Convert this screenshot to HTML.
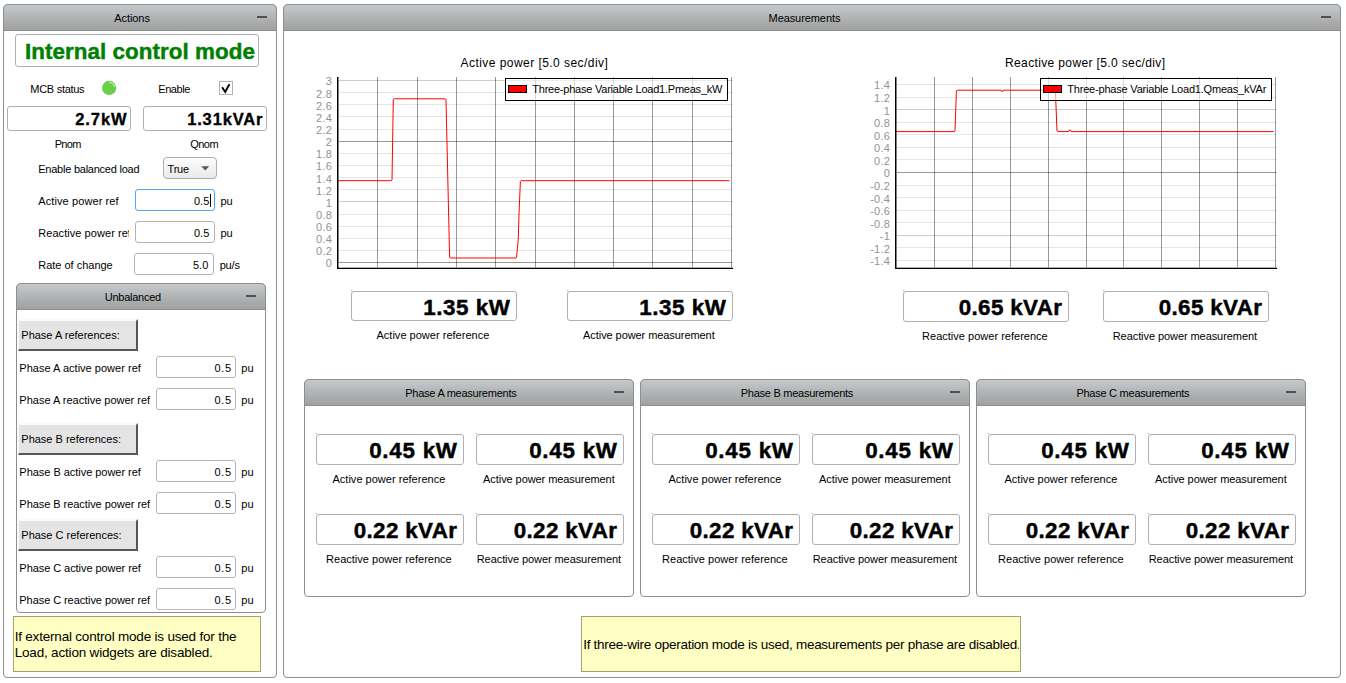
<!DOCTYPE html>
<html lang="en"><head><meta charset="utf-8"><title>Three-phase Variable Load SCADA panel</title>
<style>
html,body{margin:0;padding:0;background:#fff;}
body{width:1346px;height:683px;position:relative;overflow:hidden;font-family:"Liberation Sans",sans-serif;}
div,span.t,svg.chart{position:absolute;box-sizing:border-box;}
span.t{white-space:pre;display:block;}
.panel{border:1px solid #8e8e8e;border-radius:5px 5px 4px 4px;background:#fff;}
.phead{border:1px solid #8e8e8e;border-radius:5px 5px 0 0;background:linear-gradient(#c5cacd,#b3b6b8 45%,#a8a9a9 75%,#a2a2a2);}
.minus{width:10px;height:2px;background:#505050;}
.disp{border:1px solid #b0b0b0;border-radius:3px;background:#fff;}
.inp{border:1px solid #b4b4b4;border-radius:3px;background:#fff;}
.inp.focus{border-color:#4ba6f7;}
.combo{border:1px solid #adadad;border-radius:4px;background:linear-gradient(#fcfcfc,#eaeaea);}
.chk{border:1px solid #b2b2b2;background:#fff;}
.raised{background:#e4e4e4;border:2px solid;border-left-width:1px;border-color:#fafafa #565656 #565656 #fafafa;}
.dot::before{content:'';position:absolute;left:-1px;top:-2px;width:1px;height:1px;background:#a8a8a8;}
.note{background:#ffffc3;border:1px solid #a2a274;}
.led{width:14px;height:14px;border-radius:50%;background:radial-gradient(circle at 50% 50%,#6fd24a 0,#66cc44 100%);}
</style></head>
<body>
<div class="panel" style="left:3px;top:4px;width:274px;height:674px;"></div>
<div class="phead" style="left:3px;top:4px;width:274px;height:27px;"></div>
<div class="minus" style="left:257px;top:16px"></div>
<span class="t" style="left:114.16px;top:11px;height:15px;line-height:15px;font-size:11px;color:#000;letter-spacing:-0.050px;">Actions</span>
<div class="panel" style="left:283px;top:4px;width:1058px;height:674px;"></div>
<div class="phead" style="left:283px;top:4px;width:1058px;height:27px;"></div>
<div class="minus" style="left:1321px;top:16px"></div>
<span class="t" style="left:768.56px;top:11px;height:15px;line-height:15px;font-size:11px;color:#000;letter-spacing:-0.081px;">Measurements</span>
<div class="disp" style="left:15px;top:34px;width:244px;height:33px;"></div>
<span class="t" style="left:25.10px;top:37px;height:30px;line-height:30px;font-size:22.4px;color:#008000;font-weight:bold;-webkit-text-stroke:0.45px #008000;letter-spacing:0.044px;">Internal control mode</span>
<span class="t" style="left:30.26px;top:82px;height:15px;line-height:15px;font-size:11px;color:#000;letter-spacing:-0.275px;">MCB status</span>
<svg style="position:absolute;left:100px;top:79px" width="18" height="18" viewBox="100 79 18 18"><circle cx="109.1" cy="87.9" r="7.1" fill="#6bd048"/><path d="M109.5 82.5 A5.5 5.5 0 0 1 114.6 86.6" fill="none" stroke="#fff" stroke-opacity="0.8" stroke-width="0.9" stroke-linecap="round"/></svg>
<span class="t" style="left:158.26px;top:82px;height:15px;line-height:15px;font-size:11px;color:#000;letter-spacing:-0.417px;">Enable</span>
<div class="chk" style="left:219px;top:81px;width:14px;height:14px;"><svg width="12" height="12" viewBox="0 0 12 12" style="position:absolute;left:0;top:0"><path d="M2.1 5.3 L5.2 10.0 L9.4 2.2" fill="none" stroke="#000" stroke-width="1.9" stroke-linejoin="miter"/></svg></div>
<div class="disp" style="left:7px;top:106px;width:124px;height:25px;"></div>
<span class="t" style="left:75.24px;top:108px;height:22px;line-height:22px;font-size:16.5px;color:#000;font-weight:bold;-webkit-text-stroke:0.33px #000;letter-spacing:0.908px;">2.7kW</span>
<div class="disp" style="left:143px;top:106px;width:124px;height:25px;"></div>
<span class="t" style="left:187.14px;top:108px;height:22px;line-height:22px;font-size:16.5px;color:#000;font-weight:bold;-webkit-text-stroke:0.33px #000;letter-spacing:0.857px;">1.31kVAr</span>
<span class="t" style="left:54.66px;top:137px;height:15px;line-height:15px;font-size:11px;color:#000;letter-spacing:-0.623px;">Pnom</span>
<span class="t" style="left:190.16px;top:137px;height:15px;line-height:15px;font-size:11px;color:#000;letter-spacing:-0.496px;">Qnom</span>
<span class="t" style="left:38.26px;top:162px;height:15px;line-height:15px;font-size:11px;color:#000;letter-spacing:-0.239px;">Enable balanced load</span>
<div class="combo" style="left:163px;top:157px;width:54px;height:22px;"></div>
<span class="t" style="left:167.60px;top:162px;height:15px;line-height:15px;font-size:11px;color:#000;letter-spacing:-0.250px;">True</span>
<svg style="position:absolute;left:201px;top:166px" width="9" height="5" viewBox="0 0 9 5"><path d="M0.3 0.3 L8.2 0.3 L4.25 4.4 Z" fill="#555"/></svg>
<span class="t" style="left:38.26px;top:194px;height:15px;line-height:15px;font-size:11px;color:#000;letter-spacing:0.100px;">Active power ref</span>
<div class="inp focus" style="left:135px;top:189px;width:80px;height:22px;"></div>
<span class="t" style="left:194.00px;top:194px;height:15px;line-height:15px;font-size:11px;color:#000;">0.5</span>
<div style="position:absolute;left:210px;top:194px;width:1px;height:13px;background:#000"></div>
<span class="t" style="left:220.50px;top:194px;height:15px;line-height:15px;font-size:11px;color:#000;letter-spacing:-0.200px;">pu</span>
<span class="t" style="left:38.26px;top:226px;height:15px;line-height:15px;font-size:11px;color:#000;letter-spacing:0.057px;width:90.6px;overflow:hidden;">Reactive power ref</span>
<div class="inp" style="left:135px;top:221px;width:80px;height:22px;"></div>
<span class="t" style="left:194.00px;top:226px;height:15px;line-height:15px;font-size:11px;color:#000;">0.5</span>
<span class="t" style="left:220.50px;top:226px;height:15px;line-height:15px;font-size:11px;color:#000;letter-spacing:-0.200px;">pu</span>
<span class="t" style="left:38.26px;top:258px;height:15px;line-height:15px;font-size:11px;color:#000;letter-spacing:-0.011px;">Rate of change</span>
<div class="inp" style="left:134px;top:253px;width:80px;height:22px;"></div>
<span class="t" style="left:193.00px;top:258px;height:15px;line-height:15px;font-size:11px;color:#000;">5.0</span>
<span class="t" style="left:219.70px;top:258px;height:15px;line-height:15px;font-size:11px;color:#000;letter-spacing:-0.200px;">pu/s</span>
<div class="panel" style="left:16px;top:283px;width:250px;height:330px;"></div>
<div class="phead" style="left:16px;top:283px;width:250px;height:27px;"></div>
<div class="minus" style="left:246px;top:295px"></div>
<span class="t" style="left:104.77px;top:290px;height:15px;line-height:15px;font-size:11px;color:#000;letter-spacing:-0.250px;">Unbalanced</span>
<div class="raised" style="left:18px;top:319px;width:120px;height:32px;"></div>
<span class="t" style="left:21.30px;top:328px;height:15px;line-height:15px;font-size:11px;color:#000;">Phase A references:</span>
<span class="t" style="left:19.36px;top:361px;height:15px;line-height:15px;font-size:11px;color:#000;letter-spacing:0.017px;">Phase A active power ref</span>
<div class="inp" style="left:156px;top:356px;width:80px;height:22px;"></div>
<span class="t" style="left:214.56px;top:361px;height:15px;line-height:15px;font-size:11px;color:#000;letter-spacing:0.642px;">0.5</span>
<span class="t" style="left:241.36px;top:361px;height:15px;line-height:15px;font-size:11px;color:#000;letter-spacing:0.130px;">pu</span>
<span class="t" style="left:19.36px;top:393px;height:15px;line-height:15px;font-size:11px;color:#000;letter-spacing:-0.003px;">Phase A reactive power ref</span>
<div class="inp" style="left:156px;top:388px;width:80px;height:22px;"></div>
<span class="t" style="left:214.56px;top:393px;height:15px;line-height:15px;font-size:11px;color:#000;letter-spacing:0.642px;">0.5</span>
<span class="t" style="left:241.36px;top:393px;height:15px;line-height:15px;font-size:11px;color:#000;letter-spacing:0.130px;">pu</span>
<div class="raised" style="left:18px;top:423px;width:120px;height:32px;"></div>
<span class="t" style="left:21.30px;top:432px;height:15px;line-height:15px;font-size:11px;color:#000;">Phase B references:</span>
<span class="t" style="left:19.36px;top:465px;height:15px;line-height:15px;font-size:11px;color:#000;letter-spacing:-0.036px;">Phase B active power ref</span>
<div class="inp" style="left:156px;top:460px;width:80px;height:22px;"></div>
<span class="t" style="left:214.56px;top:465px;height:15px;line-height:15px;font-size:11px;color:#000;letter-spacing:0.642px;">0.5</span>
<span class="t" style="left:241.36px;top:465px;height:15px;line-height:15px;font-size:11px;color:#000;letter-spacing:0.130px;">pu</span>
<span class="t" style="left:19.36px;top:497px;height:15px;line-height:15px;font-size:11px;color:#000;letter-spacing:-0.052px;">Phase B reactive power ref</span>
<div class="inp" style="left:156px;top:492px;width:80px;height:22px;"></div>
<span class="t" style="left:214.56px;top:497px;height:15px;line-height:15px;font-size:11px;color:#000;letter-spacing:0.642px;">0.5</span>
<span class="t" style="left:241.36px;top:497px;height:15px;line-height:15px;font-size:11px;color:#000;letter-spacing:0.130px;">pu</span>
<div class="raised" style="left:18px;top:519px;width:120px;height:32px;"></div>
<span class="t" style="left:21.30px;top:528px;height:15px;line-height:15px;font-size:11px;color:#000;">Phase C references:</span>
<span class="t" style="left:19.36px;top:561px;height:15px;line-height:15px;font-size:11px;color:#000;letter-spacing:-0.061px;">Phase C active power ref</span>
<div class="inp" style="left:156px;top:556px;width:80px;height:22px;"></div>
<span class="t" style="left:214.56px;top:561px;height:15px;line-height:15px;font-size:11px;color:#000;letter-spacing:0.642px;">0.5</span>
<span class="t" style="left:241.36px;top:561px;height:15px;line-height:15px;font-size:11px;color:#000;letter-spacing:0.130px;">pu</span>
<span class="t" style="left:19.36px;top:593px;height:15px;line-height:15px;font-size:11px;color:#000;letter-spacing:-0.076px;">Phase C reactive power ref</span>
<div class="inp" style="left:156px;top:588px;width:80px;height:22px;"></div>
<span class="t" style="left:214.56px;top:593px;height:15px;line-height:15px;font-size:11px;color:#000;letter-spacing:0.642px;">0.5</span>
<span class="t" style="left:241.36px;top:593px;height:15px;line-height:15px;font-size:11px;color:#000;letter-spacing:0.130px;">pu</span>
<div class="note" style="left:13px;top:616px;width:248px;height:56px;"></div>
<span class="t" style="left:14.66px;top:628px;height:18px;line-height:18px;font-size:13.5px;color:#000;letter-spacing:-0.199px;">If external control mode is used for the</span>
<span class="t" style="left:14.66px;top:644px;height:18px;line-height:18px;font-size:13.5px;color:#000;letter-spacing:-0.181px;">Load, action widgets are disabled.</span>
<svg class="chart" style="left:0;top:0" width="1346" height="683" viewBox="0 0 1346 683"><line x1="339" y1="262.5" x2="732.5" y2="262.5" stroke="#000" stroke-opacity="0.4" stroke-width="1"/><line x1="339" y1="250.5" x2="732.5" y2="250.5" stroke="#000" stroke-opacity="0.098" stroke-width="1"/><line x1="339" y1="238.5" x2="732.5" y2="238.5" stroke="#000" stroke-opacity="0.098" stroke-width="1"/><line x1="339" y1="226.5" x2="732.5" y2="226.5" stroke="#000" stroke-opacity="0.098" stroke-width="1"/><line x1="339" y1="214.5" x2="732.5" y2="214.5" stroke="#000" stroke-opacity="0.098" stroke-width="1"/><line x1="339" y1="201.5" x2="732.5" y2="201.5" stroke="#000" stroke-opacity="0.2" stroke-width="1"/><line x1="339" y1="189.5" x2="732.5" y2="189.5" stroke="#000" stroke-opacity="0.098" stroke-width="1"/><line x1="339" y1="177.5" x2="732.5" y2="177.5" stroke="#000" stroke-opacity="0.098" stroke-width="1"/><line x1="339" y1="165.5" x2="732.5" y2="165.5" stroke="#000" stroke-opacity="0.098" stroke-width="1"/><line x1="339" y1="153.5" x2="732.5" y2="153.5" stroke="#000" stroke-opacity="0.098" stroke-width="1"/><line x1="339" y1="141.5" x2="732.5" y2="141.5" stroke="#000" stroke-opacity="0.4" stroke-width="1"/><line x1="339" y1="129.5" x2="732.5" y2="129.5" stroke="#000" stroke-opacity="0.098" stroke-width="1"/><line x1="339" y1="116.5" x2="732.5" y2="116.5" stroke="#000" stroke-opacity="0.098" stroke-width="1"/><line x1="339" y1="104.5" x2="732.5" y2="104.5" stroke="#000" stroke-opacity="0.098" stroke-width="1"/><line x1="339" y1="92.5" x2="732.5" y2="92.5" stroke="#000" stroke-opacity="0.098" stroke-width="1"/><line x1="339" y1="80.5" x2="732.5" y2="80.5" stroke="#000" stroke-opacity="0.2" stroke-width="1"/><line x1="377.5" y1="77" x2="377.5" y2="267.5" stroke="#000" stroke-opacity="0.4" stroke-width="1"/><line x1="417.5" y1="77" x2="417.5" y2="267.5" stroke="#000" stroke-opacity="0.4" stroke-width="1"/><line x1="456.5" y1="77" x2="456.5" y2="267.5" stroke="#000" stroke-opacity="0.4" stroke-width="1"/><line x1="495.5" y1="77" x2="495.5" y2="267.5" stroke="#000" stroke-opacity="0.4" stroke-width="1"/><line x1="535.5" y1="77" x2="535.5" y2="267.5" stroke="#000" stroke-opacity="0.4" stroke-width="1"/><line x1="574.5" y1="77" x2="574.5" y2="267.5" stroke="#000" stroke-opacity="0.4" stroke-width="1"/><line x1="613.5" y1="77" x2="613.5" y2="267.5" stroke="#000" stroke-opacity="0.4" stroke-width="1"/><line x1="652.5" y1="77" x2="652.5" y2="267.5" stroke="#000" stroke-opacity="0.4" stroke-width="1"/><line x1="692.5" y1="77" x2="692.5" y2="267.5" stroke="#000" stroke-opacity="0.4" stroke-width="1"/><line x1="731.5" y1="77" x2="731.5" y2="267.5" stroke="#000" stroke-opacity="0.4" stroke-width="1"/><path d="M338.0 180.7 L391.3 180.7 L392.0 180.0 L393.3 99.4 L394.0 98.8 L445.4 98.8 L446.0 100.0 L449.6 257.1 L450.3 258.0 L516.0 258.0 L516.6 257.1 L518.3 238.9 L519.0 214.0 L520.4 181.3 L521.0 180.7 L729.5 180.7" fill="none" stroke="#ff0000" stroke-width="1" stroke-linejoin="round"/><rect x="337" y="77" width="1.5" height="192" fill="#000"/><rect x="337" y="267.7" width="396" height="1.3" fill="#000"/><rect x="505.5" y="78.5" width="222" height="22" fill="rgba(255,255,255,0.62)" stroke="#000" stroke-width="1"/><rect x="508.5" y="85.5" width="18" height="7" fill="#ff0000" stroke="#000" stroke-width="1"/></svg>
<span class="t" style="left:460.52px;top:55px;height:16px;line-height:16px;font-size:12px;color:#000;letter-spacing:0.452px;">Active power [5.0 sec/div]</span>
<span class="t" style="left:532.26px;top:82px;height:15px;line-height:15px;font-size:11px;color:#000;letter-spacing:-0.227px;">Three-phase Variable Load1.Pmeas_kW</span>
<span class="t" style="left:325.77px;top:74px;height:15px;line-height:15px;font-size:11px;color:#939393;letter-spacing:0.250px;">3</span>
<span class="t" style="left:316.10px;top:87px;height:15px;line-height:15px;font-size:11px;color:#939393;letter-spacing:0.250px;">2.8</span>
<span class="t" style="left:316.10px;top:99px;height:15px;line-height:15px;font-size:11px;color:#939393;letter-spacing:0.250px;">2.6</span>
<span class="t" style="left:316.10px;top:111px;height:15px;line-height:15px;font-size:11px;color:#939393;letter-spacing:0.250px;">2.4</span>
<span class="t" style="left:316.10px;top:123px;height:15px;line-height:15px;font-size:11px;color:#939393;letter-spacing:0.250px;">2.2</span>
<span class="t" style="left:325.77px;top:135px;height:15px;line-height:15px;font-size:11px;color:#939393;letter-spacing:0.250px;">2</span>
<span class="t" style="left:316.10px;top:147px;height:15px;line-height:15px;font-size:11px;color:#939393;letter-spacing:0.250px;">1.8</span>
<span class="t" style="left:316.10px;top:159px;height:15px;line-height:15px;font-size:11px;color:#939393;letter-spacing:0.250px;">1.6</span>
<span class="t" style="left:316.10px;top:172px;height:15px;line-height:15px;font-size:11px;color:#939393;letter-spacing:0.250px;">1.4</span>
<span class="t" style="left:316.10px;top:184px;height:15px;line-height:15px;font-size:11px;color:#939393;letter-spacing:0.250px;">1.2</span>
<span class="t" style="left:325.77px;top:196px;height:15px;line-height:15px;font-size:11px;color:#939393;letter-spacing:0.250px;">1</span>
<span class="t" style="left:316.10px;top:208px;height:15px;line-height:15px;font-size:11px;color:#939393;letter-spacing:0.250px;">0.8</span>
<span class="t" style="left:316.10px;top:220px;height:15px;line-height:15px;font-size:11px;color:#939393;letter-spacing:0.250px;">0.6</span>
<span class="t" style="left:316.10px;top:232px;height:15px;line-height:15px;font-size:11px;color:#939393;letter-spacing:0.250px;">0.4</span>
<span class="t" style="left:316.10px;top:244px;height:15px;line-height:15px;font-size:11px;color:#939393;letter-spacing:0.250px;">0.2</span>
<span class="t" style="left:325.77px;top:256px;height:15px;line-height:15px;font-size:11px;color:#939393;letter-spacing:0.250px;">0</span>
<svg class="chart" style="left:0;top:0" width="1346" height="683" viewBox="0 0 1346 683"><line x1="897" y1="260.5" x2="1276.5" y2="260.5" stroke="#000" stroke-opacity="0.098" stroke-width="1"/><line x1="897" y1="247.5" x2="1276.5" y2="247.5" stroke="#000" stroke-opacity="0.098" stroke-width="1"/><line x1="897" y1="235.5" x2="1276.5" y2="235.5" stroke="#000" stroke-opacity="0.2" stroke-width="1"/><line x1="897" y1="222.5" x2="1276.5" y2="222.5" stroke="#000" stroke-opacity="0.098" stroke-width="1"/><line x1="897" y1="210.5" x2="1276.5" y2="210.5" stroke="#000" stroke-opacity="0.098" stroke-width="1"/><line x1="897" y1="197.5" x2="1276.5" y2="197.5" stroke="#000" stroke-opacity="0.098" stroke-width="1"/><line x1="897" y1="185.5" x2="1276.5" y2="185.5" stroke="#000" stroke-opacity="0.098" stroke-width="1"/><line x1="897" y1="172.5" x2="1276.5" y2="172.5" stroke="#000" stroke-opacity="0.4" stroke-width="1"/><line x1="897" y1="159.5" x2="1276.5" y2="159.5" stroke="#000" stroke-opacity="0.098" stroke-width="1"/><line x1="897" y1="147.5" x2="1276.5" y2="147.5" stroke="#000" stroke-opacity="0.098" stroke-width="1"/><line x1="897" y1="134.5" x2="1276.5" y2="134.5" stroke="#000" stroke-opacity="0.098" stroke-width="1"/><line x1="897" y1="122.5" x2="1276.5" y2="122.5" stroke="#000" stroke-opacity="0.098" stroke-width="1"/><line x1="897" y1="109.5" x2="1276.5" y2="109.5" stroke="#000" stroke-opacity="0.2" stroke-width="1"/><line x1="897" y1="97.5" x2="1276.5" y2="97.5" stroke="#000" stroke-opacity="0.098" stroke-width="1"/><line x1="897" y1="84.5" x2="1276.5" y2="84.5" stroke="#000" stroke-opacity="0.098" stroke-width="1"/><line x1="934.5" y1="77" x2="934.5" y2="267.5" stroke="#000" stroke-opacity="0.4" stroke-width="1"/><line x1="972.5" y1="77" x2="972.5" y2="267.5" stroke="#000" stroke-opacity="0.4" stroke-width="1"/><line x1="1010.5" y1="77" x2="1010.5" y2="267.5" stroke="#000" stroke-opacity="0.4" stroke-width="1"/><line x1="1048.5" y1="77" x2="1048.5" y2="267.5" stroke="#000" stroke-opacity="0.4" stroke-width="1"/><line x1="1086.5" y1="77" x2="1086.5" y2="267.5" stroke="#000" stroke-opacity="0.4" stroke-width="1"/><line x1="1123.5" y1="77" x2="1123.5" y2="267.5" stroke="#000" stroke-opacity="0.4" stroke-width="1"/><line x1="1161.5" y1="77" x2="1161.5" y2="267.5" stroke="#000" stroke-opacity="0.4" stroke-width="1"/><line x1="1199.5" y1="77" x2="1199.5" y2="267.5" stroke="#000" stroke-opacity="0.4" stroke-width="1"/><line x1="1237.5" y1="77" x2="1237.5" y2="267.5" stroke="#000" stroke-opacity="0.4" stroke-width="1"/><line x1="1275.5" y1="77" x2="1275.5" y2="267.5" stroke="#000" stroke-opacity="0.4" stroke-width="1"/><path d="M896.0 131.6 L954.4 131.6 L955.0 131.0 L956.4 90.8 L957.0 90.2 L1001.2 90.2 L1001.8 91.6 L1002.6 91.6 L1003.2 90.2 L1054.8 90.2 L1055.4 90.8 L1057.0 131.0 L1057.6 131.6 L1068.8 131.6 L1069.5 130.0 L1070.5 130.0 L1071.2 131.6 L1273.5 131.6" fill="none" stroke="#ff0000" stroke-width="1" stroke-linejoin="round"/><rect x="895" y="77" width="1.5" height="192" fill="#000"/><rect x="895" y="267.7" width="382" height="1.3" fill="#000"/><rect x="1040.5" y="78.5" width="231" height="22" fill="rgba(255,255,255,0.62)" stroke="#000" stroke-width="1"/><rect x="1043.5" y="85.5" width="18" height="7" fill="#ff0000" stroke="#000" stroke-width="1"/></svg>
<span class="t" style="left:1005.02px;top:55px;height:16px;line-height:16px;font-size:12px;color:#000;letter-spacing:0.366px;">Reactive power [5.0 sec/div]</span>
<span class="t" style="left:1067.26px;top:82px;height:15px;line-height:15px;font-size:11px;color:#000;letter-spacing:-0.197px;">Three-phase Variable Load1.Qmeas_kVAr</span>
<span class="t" style="left:874.10px;top:78px;height:15px;line-height:15px;font-size:11px;color:#939393;letter-spacing:0.250px;">1.4</span>
<span class="t" style="left:874.10px;top:91px;height:15px;line-height:15px;font-size:11px;color:#939393;letter-spacing:0.250px;">1.2</span>
<span class="t" style="left:883.77px;top:104px;height:15px;line-height:15px;font-size:11px;color:#939393;letter-spacing:0.250px;">1</span>
<span class="t" style="left:874.10px;top:116px;height:15px;line-height:15px;font-size:11px;color:#939393;letter-spacing:0.250px;">0.8</span>
<span class="t" style="left:874.10px;top:129px;height:15px;line-height:15px;font-size:11px;color:#939393;letter-spacing:0.250px;">0.6</span>
<span class="t" style="left:874.10px;top:141px;height:15px;line-height:15px;font-size:11px;color:#939393;letter-spacing:0.250px;">0.4</span>
<span class="t" style="left:874.10px;top:154px;height:15px;line-height:15px;font-size:11px;color:#939393;letter-spacing:0.250px;">0.2</span>
<span class="t" style="left:883.77px;top:166px;height:15px;line-height:15px;font-size:11px;color:#939393;letter-spacing:0.250px;">0</span>
<span class="t" style="left:870.18px;top:179px;height:15px;line-height:15px;font-size:11px;color:#939393;letter-spacing:0.250px;">-0.2</span>
<span class="t" style="left:870.18px;top:192px;height:15px;line-height:15px;font-size:11px;color:#939393;letter-spacing:0.250px;">-0.4</span>
<span class="t" style="left:870.18px;top:204px;height:15px;line-height:15px;font-size:11px;color:#939393;letter-spacing:0.250px;">-0.6</span>
<span class="t" style="left:870.18px;top:217px;height:15px;line-height:15px;font-size:11px;color:#939393;letter-spacing:0.250px;">-0.8</span>
<span class="t" style="left:879.87px;top:229px;height:15px;line-height:15px;font-size:11px;color:#939393;letter-spacing:0.250px;">-1</span>
<span class="t" style="left:870.18px;top:242px;height:15px;line-height:15px;font-size:11px;color:#939393;letter-spacing:0.250px;">-1.2</span>
<span class="t" style="left:870.18px;top:254px;height:15px;line-height:15px;font-size:11px;color:#939393;letter-spacing:0.250px;">-1.4</span>
<div class="disp dot" style="left:351px;top:291px;width:166px;height:30px;"></div>
<span class="t" style="left:423.20px;top:293px;height:30px;line-height:30px;font-size:22.4px;color:#000;font-weight:bold;-webkit-text-stroke:0.45px #000;letter-spacing:0.567px;">1.35 kW</span>
<span class="t" style="left:376.46px;top:328px;height:15px;line-height:15px;font-size:11px;color:#000;letter-spacing:0.018px;">Active power reference</span>
<div class="disp dot" style="left:567px;top:291px;width:166px;height:30px;"></div>
<span class="t" style="left:639.20px;top:293px;height:30px;line-height:30px;font-size:22.4px;color:#000;font-weight:bold;-webkit-text-stroke:0.45px #000;letter-spacing:0.567px;">1.35 kW</span>
<span class="t" style="left:583.11px;top:328px;height:15px;line-height:15px;font-size:11px;color:#000;letter-spacing:-0.074px;">Active power measurement</span>
<div class="disp dot" style="left:903px;top:291px;width:166px;height:31px;"></div>
<span class="t" style="left:958.70px;top:293px;height:30px;line-height:30px;font-size:22.4px;color:#000;font-weight:bold;-webkit-text-stroke:0.45px #000;letter-spacing:0.359px;">0.65 kVAr</span>
<span class="t" style="left:922.06px;top:329px;height:15px;line-height:15px;font-size:11px;color:#000;letter-spacing:0.015px;">Reactive power reference</span>
<div class="disp dot" style="left:1103px;top:291px;width:166px;height:31px;"></div>
<span class="t" style="left:1158.70px;top:293px;height:30px;line-height:30px;font-size:22.4px;color:#000;font-weight:bold;-webkit-text-stroke:0.45px #000;letter-spacing:0.359px;">0.65 kVAr</span>
<span class="t" style="left:1112.76px;top:329px;height:15px;line-height:15px;font-size:11px;color:#000;letter-spacing:-0.074px;">Reactive power measurement</span>
<div class="panel" style="left:304px;top:379px;width:330px;height:218px;"></div>
<div class="phead" style="left:304px;top:379px;width:330px;height:27px;"></div>
<div class="minus" style="left:614px;top:391px"></div>
<span class="t" style="left:405.28px;top:386px;height:15px;line-height:15px;font-size:11px;color:#000;letter-spacing:-0.250px;">Phase A measurements</span>
<div class="disp dot" style="left:316px;top:434px;width:148px;height:31px;"></div>
<span class="t" style="left:369.20px;top:436px;height:30px;line-height:30px;font-size:22.4px;color:#000;font-weight:bold;-webkit-text-stroke:0.45px #000;letter-spacing:0.734px;">0.45 kW</span>
<span class="t" style="left:332.46px;top:472px;height:15px;line-height:15px;font-size:11px;color:#000;letter-spacing:0.018px;">Active power reference</span>
<div class="disp dot" style="left:476px;top:434px;width:148px;height:31px;"></div>
<span class="t" style="left:529.20px;top:436px;height:30px;line-height:30px;font-size:22.4px;color:#000;font-weight:bold;-webkit-text-stroke:0.45px #000;letter-spacing:0.734px;">0.45 kW</span>
<span class="t" style="left:483.11px;top:472px;height:15px;line-height:15px;font-size:11px;color:#000;letter-spacing:-0.074px;">Active power measurement</span>
<div class="disp dot" style="left:316px;top:514px;width:148px;height:31px;"></div>
<span class="t" style="left:353.70px;top:516px;height:30px;line-height:30px;font-size:22.4px;color:#000;font-weight:bold;-webkit-text-stroke:0.45px #000;letter-spacing:0.359px;">0.22 kVAr</span>
<span class="t" style="left:326.06px;top:552px;height:15px;line-height:15px;font-size:11px;color:#000;letter-spacing:0.015px;">Reactive power reference</span>
<div class="disp dot" style="left:476px;top:514px;width:148px;height:31px;"></div>
<span class="t" style="left:513.70px;top:516px;height:30px;line-height:30px;font-size:22.4px;color:#000;font-weight:bold;-webkit-text-stroke:0.45px #000;letter-spacing:0.359px;">0.22 kVAr</span>
<span class="t" style="left:476.76px;top:552px;height:15px;line-height:15px;font-size:11px;color:#000;letter-spacing:-0.074px;">Reactive power measurement</span>
<div class="panel" style="left:640px;top:379px;width:330px;height:218px;"></div>
<div class="phead" style="left:640px;top:379px;width:330px;height:27px;"></div>
<div class="minus" style="left:950px;top:391px"></div>
<span class="t" style="left:740.68px;top:386px;height:15px;line-height:15px;font-size:11px;color:#000;letter-spacing:-0.250px;">Phase B measurements</span>
<div class="disp dot" style="left:652px;top:434px;width:148px;height:31px;"></div>
<span class="t" style="left:705.20px;top:436px;height:30px;line-height:30px;font-size:22.4px;color:#000;font-weight:bold;-webkit-text-stroke:0.45px #000;letter-spacing:0.734px;">0.45 kW</span>
<span class="t" style="left:668.46px;top:472px;height:15px;line-height:15px;font-size:11px;color:#000;letter-spacing:0.018px;">Active power reference</span>
<div class="disp dot" style="left:812px;top:434px;width:148px;height:31px;"></div>
<span class="t" style="left:865.20px;top:436px;height:30px;line-height:30px;font-size:22.4px;color:#000;font-weight:bold;-webkit-text-stroke:0.45px #000;letter-spacing:0.734px;">0.45 kW</span>
<span class="t" style="left:819.11px;top:472px;height:15px;line-height:15px;font-size:11px;color:#000;letter-spacing:-0.074px;">Active power measurement</span>
<div class="disp dot" style="left:652px;top:514px;width:148px;height:31px;"></div>
<span class="t" style="left:689.70px;top:516px;height:30px;line-height:30px;font-size:22.4px;color:#000;font-weight:bold;-webkit-text-stroke:0.45px #000;letter-spacing:0.359px;">0.22 kVAr</span>
<span class="t" style="left:662.06px;top:552px;height:15px;line-height:15px;font-size:11px;color:#000;letter-spacing:0.015px;">Reactive power reference</span>
<div class="disp dot" style="left:812px;top:514px;width:148px;height:31px;"></div>
<span class="t" style="left:849.70px;top:516px;height:30px;line-height:30px;font-size:22.4px;color:#000;font-weight:bold;-webkit-text-stroke:0.45px #000;letter-spacing:0.359px;">0.22 kVAr</span>
<span class="t" style="left:812.76px;top:552px;height:15px;line-height:15px;font-size:11px;color:#000;letter-spacing:-0.074px;">Reactive power measurement</span>
<div class="panel" style="left:976px;top:379px;width:330px;height:218px;"></div>
<div class="phead" style="left:976px;top:379px;width:330px;height:27px;"></div>
<div class="minus" style="left:1286px;top:391px"></div>
<span class="t" style="left:1076.38px;top:386px;height:15px;line-height:15px;font-size:11px;color:#000;letter-spacing:-0.250px;">Phase C measurements</span>
<div class="disp dot" style="left:988px;top:434px;width:148px;height:31px;"></div>
<span class="t" style="left:1041.20px;top:436px;height:30px;line-height:30px;font-size:22.4px;color:#000;font-weight:bold;-webkit-text-stroke:0.45px #000;letter-spacing:0.734px;">0.45 kW</span>
<span class="t" style="left:1004.46px;top:472px;height:15px;line-height:15px;font-size:11px;color:#000;letter-spacing:0.018px;">Active power reference</span>
<div class="disp dot" style="left:1148px;top:434px;width:148px;height:31px;"></div>
<span class="t" style="left:1201.20px;top:436px;height:30px;line-height:30px;font-size:22.4px;color:#000;font-weight:bold;-webkit-text-stroke:0.45px #000;letter-spacing:0.734px;">0.45 kW</span>
<span class="t" style="left:1155.11px;top:472px;height:15px;line-height:15px;font-size:11px;color:#000;letter-spacing:-0.074px;">Active power measurement</span>
<div class="disp dot" style="left:988px;top:514px;width:148px;height:31px;"></div>
<span class="t" style="left:1025.70px;top:516px;height:30px;line-height:30px;font-size:22.4px;color:#000;font-weight:bold;-webkit-text-stroke:0.45px #000;letter-spacing:0.359px;">0.22 kVAr</span>
<span class="t" style="left:998.06px;top:552px;height:15px;line-height:15px;font-size:11px;color:#000;letter-spacing:0.015px;">Reactive power reference</span>
<div class="disp dot" style="left:1148px;top:514px;width:148px;height:31px;"></div>
<span class="t" style="left:1185.70px;top:516px;height:30px;line-height:30px;font-size:22.4px;color:#000;font-weight:bold;-webkit-text-stroke:0.45px #000;letter-spacing:0.359px;">0.22 kVAr</span>
<span class="t" style="left:1148.76px;top:552px;height:15px;line-height:15px;font-size:11px;color:#000;letter-spacing:-0.074px;">Reactive power measurement</span>
<div class="note" style="left:581px;top:616px;width:440px;height:56px;"></div>
<span class="t" style="left:583.16px;top:636px;height:18px;line-height:18px;font-size:13.5px;color:#000;letter-spacing:-0.266px;width:435.4px;overflow:hidden;">If three-wire operation mode is used, measurements per phase are disabled.</span>
</body></html>
